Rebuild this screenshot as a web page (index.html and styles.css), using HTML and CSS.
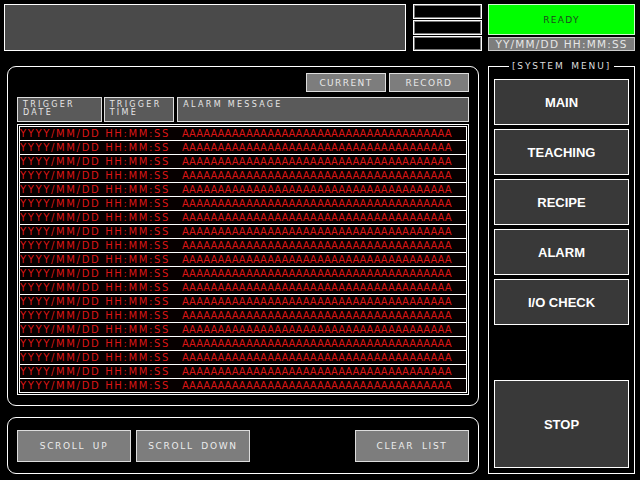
FILE: index.html
```html
<!DOCTYPE html>
<html>
<head>
<meta charset="utf-8">
<link rel="stylesheet" href="styles.css">
</head>
<body>
<div class="screen">
  <div class="topbar">
    <div class="title-box"></div>
    <div class="mini-stack">
      <div class="mini"></div>
      <div class="mini"></div>
      <div class="mini"></div>
    </div>
    <div class="status">
      <div class="ready">READY</div>
      <div class="clock">YY/MM/DD HH:MM:SS</div>
    </div>
  </div>
  <div class="main">
    <div class="left">
      <div class="panel list-panel">
        <div class="tabs">
          <div class="tab">CURRENT</div>
          <div class="tab">RECORD</div>
        </div>
        <div class="head">
          <div class="hcell hdate"><span>TRIGGER</span><span>DATE</span></div>
          <div class="hcell htime"><span>TRIGGER</span><span>TIME</span></div>
          <div class="hcell hmsg"><span>ALARM MESSAGE</span></div>
        </div>
        <div class="list">
          <div class="list-inner">
            <div class="row"><span class="d">YYYY/MM/DD HH:MM:SS</span><span class="m">AAAAAAAAAAAAAAAAAAAAAAAAAAAAAAAAAAAAAA</span></div>
            <div class="row"><span class="d">YYYY/MM/DD HH:MM:SS</span><span class="m">AAAAAAAAAAAAAAAAAAAAAAAAAAAAAAAAAAAAAA</span></div>
            <div class="row"><span class="d">YYYY/MM/DD HH:MM:SS</span><span class="m">AAAAAAAAAAAAAAAAAAAAAAAAAAAAAAAAAAAAAA</span></div>
            <div class="row"><span class="d">YYYY/MM/DD HH:MM:SS</span><span class="m">AAAAAAAAAAAAAAAAAAAAAAAAAAAAAAAAAAAAAA</span></div>
            <div class="row"><span class="d">YYYY/MM/DD HH:MM:SS</span><span class="m">AAAAAAAAAAAAAAAAAAAAAAAAAAAAAAAAAAAAAA</span></div>
            <div class="row"><span class="d">YYYY/MM/DD HH:MM:SS</span><span class="m">AAAAAAAAAAAAAAAAAAAAAAAAAAAAAAAAAAAAAA</span></div>
            <div class="row"><span class="d">YYYY/MM/DD HH:MM:SS</span><span class="m">AAAAAAAAAAAAAAAAAAAAAAAAAAAAAAAAAAAAAA</span></div>
            <div class="row"><span class="d">YYYY/MM/DD HH:MM:SS</span><span class="m">AAAAAAAAAAAAAAAAAAAAAAAAAAAAAAAAAAAAAA</span></div>
            <div class="row"><span class="d">YYYY/MM/DD HH:MM:SS</span><span class="m">AAAAAAAAAAAAAAAAAAAAAAAAAAAAAAAAAAAAAA</span></div>
            <div class="row"><span class="d">YYYY/MM/DD HH:MM:SS</span><span class="m">AAAAAAAAAAAAAAAAAAAAAAAAAAAAAAAAAAAAAA</span></div>
            <div class="row"><span class="d">YYYY/MM/DD HH:MM:SS</span><span class="m">AAAAAAAAAAAAAAAAAAAAAAAAAAAAAAAAAAAAAA</span></div>
            <div class="row"><span class="d">YYYY/MM/DD HH:MM:SS</span><span class="m">AAAAAAAAAAAAAAAAAAAAAAAAAAAAAAAAAAAAAA</span></div>
            <div class="row"><span class="d">YYYY/MM/DD HH:MM:SS</span><span class="m">AAAAAAAAAAAAAAAAAAAAAAAAAAAAAAAAAAAAAA</span></div>
            <div class="row"><span class="d">YYYY/MM/DD HH:MM:SS</span><span class="m">AAAAAAAAAAAAAAAAAAAAAAAAAAAAAAAAAAAAAA</span></div>
            <div class="row"><span class="d">YYYY/MM/DD HH:MM:SS</span><span class="m">AAAAAAAAAAAAAAAAAAAAAAAAAAAAAAAAAAAAAA</span></div>
            <div class="row"><span class="d">YYYY/MM/DD HH:MM:SS</span><span class="m">AAAAAAAAAAAAAAAAAAAAAAAAAAAAAAAAAAAAAA</span></div>
            <div class="row"><span class="d">YYYY/MM/DD HH:MM:SS</span><span class="m">AAAAAAAAAAAAAAAAAAAAAAAAAAAAAAAAAAAAAA</span></div>
            <div class="row"><span class="d">YYYY/MM/DD HH:MM:SS</span><span class="m">AAAAAAAAAAAAAAAAAAAAAAAAAAAAAAAAAAAAAA</span></div>
            <div class="row"><span class="d">YYYY/MM/DD HH:MM:SS</span><span class="m">AAAAAAAAAAAAAAAAAAAAAAAAAAAAAAAAAAAAAA</span></div>
          </div>
        </div>
      </div>
      <div class="panel ctrl-panel">
        <div class="cbtn">SCROLL UP</div>
        <div class="cbtn">SCROLL DOWN</div>
        <div class="spacer"></div>
        <div class="cbtn">CLEAR LIST</div>
      </div>
    </div>
    <fieldset class="menu">
      <legend>[SYSTEM MENU]</legend>
      <div class="mbtn">MAIN</div>
      <div class="mbtn">TEACHING</div>
      <div class="mbtn">RECIPE</div>
      <div class="mbtn">ALARM</div>
      <div class="mbtn">I/O CHECK</div>
      <div class="mbtn stop">STOP</div>
    </fieldset>
  </div>
</div>
</body>
</html>
```
FILE: styles.css
```css
* { box-sizing: border-box; }
html, body { margin: 0; padding: 0; background: #000; }
body { width: 640px; height: 480px; overflow: hidden; font-family: "DejaVu Sans", sans-serif; }
.screen { width: 640px; height: 480px; }

.topbar { display: flex; padding: 4px 0 0 4px; height: 51px; }
.title-box { width: 402px; height: 47px; background: #4a4a4a; border: 1px solid #fff; }
.mini-stack { margin-left: 7px; width: 69px; height: 47px; display: flex; flex-direction: column; gap: 1px; background: #000; }
.mini { flex: 1; border: 1px solid #fff; background: #000; box-shadow: inset 0 0 0 1px #777; }
.status { margin-left: 6px; width: 147px; display: flex; flex-direction: column; gap: 2px; }
.ready { height: 31px; background: #00ff00; border: 1px solid #cfc; color: #1e4a1e; font-size: 9px; letter-spacing: 1.3px; display: flex; align-items: center; justify-content: center; }
.clock { height: 14px; background: #7d7d7d; border: 1px solid #ccc; color: #e6e6e6; font-size: 10.5px; letter-spacing: 1.2px; display: flex; align-items: center; justify-content: center; white-space: nowrap; }

.main { display: flex; align-items: flex-start; margin-top: 9px; }
.left { margin-left: 7px; margin-top: 6px; width: 472px; display: flex; flex-direction: column; gap: 11px; }
.panel { border: 1px solid #fff; border-radius: 9px; }
.list-panel { height: 340px; padding: 6px 9px 0 9px; }
.tabs { display: flex; justify-content: flex-end; gap: 3px; }
.tab { width: 80px; height: 19px; background: #7d7d7d; border: 1px solid #ddd; color: #e8e8e8; font-size: 9px; letter-spacing: 1.4px; display: flex; align-items: center; justify-content: center; }
.head { display: flex; margin-top: 5px; height: 25px; }
.hcell { background: #5a5a5a; border: 1px solid #ddd; color: #e6e6e6; font-size: 8px; line-height: 8px; letter-spacing: 2.3px; padding: 3px 0 0 5px; display: flex; flex-direction: column; }
.hdate { width: 85px; }
.htime { width: 71px; margin-left: 2px; }
.hmsg { width: 293px; margin-left: 3px; }
.list { margin-top: 2px; border: 1px solid #fff; padding: 1px; height: 271px; }
.list-inner { border: 1px solid #fff; height: 100%; display: flex; flex-direction: column; }
.row { height: 14px; border-bottom: 1px solid #fff; display: flex; align-items: center; color: #dc1616; font-size: 10px; white-space: nowrap; background: #060000; }
.row:last-child { border-bottom: none; height: 13px; }
.d { width: 162px; letter-spacing: 1.65px; }
.m { letter-spacing: -0.02px; }

.ctrl-panel { height: 57px; display: flex; align-items: center; padding: 0 9px; gap: 5px; }
.cbtn { width: 114px; height: 32px; background: #7d7d7d; border: 1px solid #ddd; color: #ececec; font-size: 9px; letter-spacing: 1.7px; word-spacing: 3px; display: flex; align-items: center; justify-content: center; white-space: nowrap; }
.spacer { flex: 1; }

.menu { margin: 0 0 0 9px; width: 147px; height: 414px; border: 1px solid #fff; padding: 7px 5px 5px 5px; display: flex; flex-direction: column; gap: 4px; min-width: 0; }
.menu legend { margin: 0 auto; padding: 0 3px; color: #ddd; font-size: 9px; line-height: 12px; letter-spacing: 1.9px; word-spacing: 2px; }
.mbtn { height: 46px; background: #393939; border: 1px solid #fff; color: #fff; font-family: "Liberation Sans", sans-serif; font-weight: bold; font-size: 13px; display: flex; align-items: center; justify-content: center; flex: none; }
.stop { margin-top: auto; height: 88px; }
```
